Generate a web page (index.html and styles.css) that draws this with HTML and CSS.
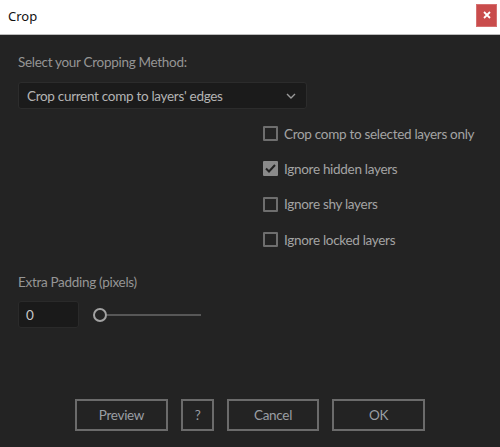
FILE: index.html
```html
<!DOCTYPE html>
<html>
<head>
<meta charset="utf-8">
<link rel="stylesheet" href="styles.css">
</head>
<body>
<div class="window">
  <div class="titlebar">
    <span class="title">Crop</span>
    <div class="close"><svg width="10" height="10" viewBox="0 0 10 10"><path d="M2 2 L8 8 M8 2 L2 8" stroke="#fff" stroke-width="1.8"/></svg></div>
  </div>
  <div class="content">
    <div class="label">Select your Cropping Method:</div>
    <div class="select">
      <span>Crop current comp to layers' edges</span>
      <svg class="chev" width="10" height="6" viewBox="0 0 10 6"><path d="M1 1 L5 5 L9 1" fill="none" stroke="#9a9a9a" stroke-width="1.4"/></svg>
    </div>
    <div class="options">
      <div class="opt"><span class="box"></span><span>Crop comp to selected layers only</span></div>
      <div class="opt"><span class="box checked"><svg width="11" height="9" viewBox="0 0 11 9"><path d="M1 4.5 L4 7.5 L10 1" fill="none" stroke="#222" stroke-width="2"/></svg></span><span>Ignore hidden layers</span></div>
      <div class="opt"><span class="box"></span><span>Ignore shy layers</span></div>
      <div class="opt"><span class="box"></span><span>Ignore locked layers</span></div>
    </div>
    <div class="label pad-label">Extra Padding (pixels)</div>
    <div class="padrow">
      <div class="num">0</div>
      <div class="slider"><span class="knob"></span><span class="track"></span></div>
    </div>
    <div class="buttons">
      <div class="btn w93">Preview</div>
      <div class="btn w33">?</div>
      <div class="btn w92">Cancel</div>
      <div class="btn w93">OK</div>
    </div>
  </div>
</div>
</body>
</html>
```
FILE: styles.css
```css
* { box-sizing: border-box; }
html, body { margin: 0; padding: 0; }
body { width: 500px; height: 447px; background: #232323; font-family: Lato, "Open Sans", sans-serif; overflow: hidden; }
.window { display: flex; flex-direction: column; height: 447px; }
.titlebar { height: 35px; background: #fff; border-bottom: 1px solid #bdbdbd; display: flex; align-items: center; justify-content: space-between; padding: 0 3px 0 8px; flex: none; }
.title { font-family: "Noto Sans", "Open Sans", sans-serif; font-size: 13px; color: #111; margin-top: -2px; }
.close { width: 21px; height: 23px; background: #c94c4c; border: 1px solid #d57070; display: flex; align-items: center; justify-content: center; margin-top: -4px; }
.content { flex: 1; display: flex; flex-direction: column; padding: 18px 18px 16px 18px; letter-spacing: -0.3px; }
.label { font-size: 13.5px; color: #959595; line-height: 18px; }
.select { margin-top: 11px; width: 289px; height: 27px; background: #1b1b1b; border: 1px solid #2c2c2c; border-radius: 3px; display: flex; align-items: center; justify-content: space-between; padding: 0 10px 0 8px; font-size: 13.5px; color: #b4b4b4; }
.chev { margin-top: 1px; }
.options { margin-top: 7px; padding-left: 245px; display: flex; flex-direction: column; }
.opt { height: 35.3px; display: flex; align-items: center; gap: 6px; font-size: 13.5px; color: #a3a3a3; white-space: nowrap; }
.box { width: 15px; height: 15px; border: 2px solid #6e6e6e; border-radius: 1px; display: flex; align-items: center; justify-content: center; flex: none; }
.box.checked { background: #8a8a8a; border-color: #8a8a8a; }
.pad-label { margin-top: 16px; }
.padrow { margin-top: 10px; display: flex; align-items: center; }
.num { width: 61px; height: 27px; background: #1a1a1a; border: 1px solid #2a2a2a; border-radius: 3px; font-size: 13.5px; color: #c8c8c8; display: flex; align-items: center; padding-left: 7px; }
.slider { display: flex; align-items: center; margin-left: 14px; }
.knob { width: 14px; height: 14px; border: 2px solid #a2a2a2; border-radius: 50%; background: #232323; }
.track { width: 94px; height: 2px; background: #575757; }
.buttons { margin-top: auto; display: flex; justify-content: center; gap: 13px; }
.btn { height: 32px; border: 2px solid #6b6b6b; display: flex; align-items: center; justify-content: center; font-size: 13.5px; color: #9a9ea4; }
.w93 { width: 93px; }
.w92 { width: 92px; }
.w33 { width: 33px; }
```
